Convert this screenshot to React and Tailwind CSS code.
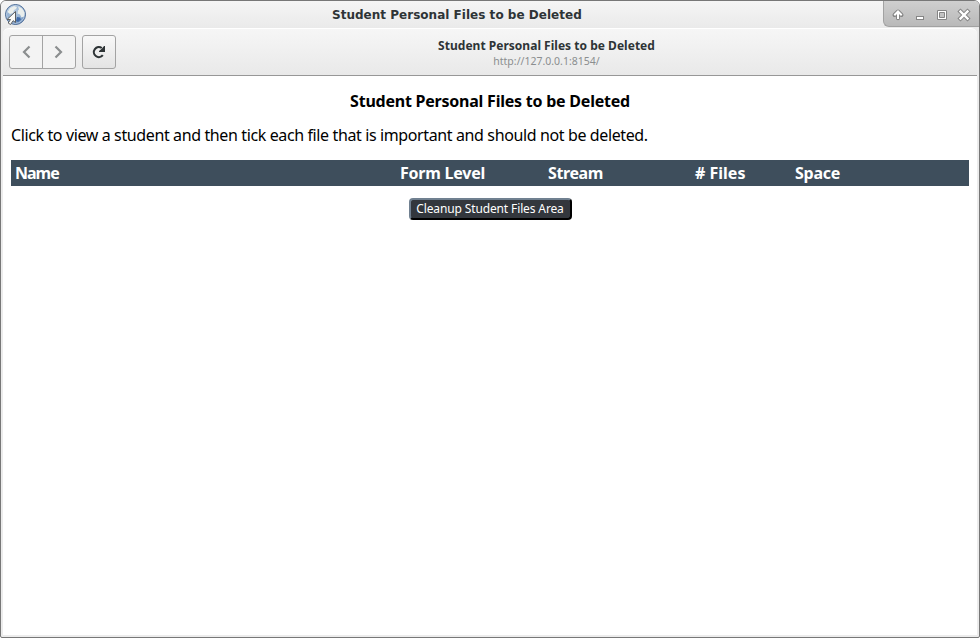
function GlobeIcon() {
  return (
    <svg width="24" height="24" viewBox="0 0 24 24" className="ml-[3px] mt-[2px] shrink-0">
      <defs>
        <radialGradient id="sea" cx="45%" cy="35%" r="75%">
          <stop offset="0" stopColor="#b9cde2" />
          <stop offset="0.6" stopColor="#8eadd0" />
          <stop offset="1" stopColor="#466ea8" />
        </radialGradient>
      </defs>
      <circle cx="11.5" cy="11.5" r="10" fill="url(#sea)" stroke="#4a6a94" />
      <circle cx="11.5" cy="11.5" r="8.9" fill="none" stroke="#c5d6e8" strokeWidth="0.8" />
      <path d="M3.5 9l2.5-4 4-2 3 1-1 2-2 1-1 3-3 1zM14 3.5l4 2 2.5 4-.5 4-2.5 1-1.500-3-2.500-1 .5-3 1-1z" fill="#f1f3ee" opacity=".92" />
      <path d="M13 14l3 .5 1 2-3 2.5-2-1z" fill="#3f6aa8" />
      <path d="M11.5 8.500v11l-2.300-1.800-2.700 3.800-2.300-1.500 2.300-3.500H3z" fill="#fafaf8" stroke="#5b5e60" strokeLinejoin="round" />
    </svg>
  );
}

function WindowControls() {
  return (
    <div className="h-[26px] w-[96px] shrink-0 rounded-bl-[6px] border-b border-l border-[#a2a2a2] bg-gradient-to-b from-[#cfcfcf] to-[#b9b9b9]">
      <svg width="95" height="26" viewBox="884 1 95 26" fill="none">
        <path d="M898 18.2V12.500M894.500 15l3.500-3.500 3.500 3.500" stroke="#858585" strokeWidth="4" strokeLinecap="round" strokeLinejoin="round" />
        <path d="M898 19V12.500M894.300 15.200l3.700-3.700 3.700 3.700" stroke="#fff" strokeWidth="2" />
        <rect x="916.5" y="16.5" width="7" height="3" fill="#fff" stroke="#858585" />
        <path d="M937.5 10.5h9v9h-9zM939.5 12.5v5h5v-5z" fill="#fff" fillRule="evenodd" stroke="#858585" />
        <path d="M960.5 11.5l7 7m0-7l-7 7" stroke="#858585" strokeWidth="4.4" strokeLinecap="square" />
        <path d="M960.5 11.5l7 7m0-7l-7 7" stroke="#fff" strokeWidth="2.4" strokeLinecap="square" />
      </svg>
    </div>
  );
}

function Chevron({ d }) {
  return (
    <svg width="12" height="14" viewBox="0 0 12 14" fill="none" stroke="#8b8e8f" strokeWidth="2.2">
      <path d={d} />
    </svg>
  );
}

export default function App() {
  return (
    <div className="flex h-[638px] w-[980px] flex-col overflow-hidden rounded-t-[6px] rounded-b-[2px] border border-[#777] bg-[#ececec]">
      <header className="flex h-[27px] shrink-0 items-start bg-gradient-to-b from-[#f5f5f5] to-[#eaeaea]">
        <GlobeIcon />
        <h1 className="flex-1 pl-[3px] text-center font-['DejaVu_Sans',sans-serif] text-[12px] font-bold leading-[28px] text-[#2e3436] whitespace-nowrap">
          <span className="inline-block w-[250px] text-left tracking-[0.02px]">Student Personal Files to be Deleted</span>
        </h1>
        <WindowControls />
      </header>

      <div className="mx-[2px] mb-[2px] flex min-h-0 flex-1 flex-col">
        <nav className="flex h-[48px] shrink-0 items-start rounded-t-[6px] border-t border-b border-t-white border-b-[#979797] bg-gradient-to-b from-[#f6f6f6] to-[#e9e9e9] pl-[6px] pt-[6px]">
          <div className="flex h-[34px] w-[67px] rounded-[3px] border border-[#a3a3a3] bg-[#f3f3f3]">
            <button className="flex w-[33px] items-center justify-center border-r border-[#a3a3a3] pl-[2px]">
              <Chevron d="M8.5 1.5L3 7l5.5 5.5" />
            </button>
            <button className="flex flex-1 items-center justify-center pr-[2px]">
              <Chevron d="M3.5 1.5L9 7l-5.5 5.5" />
            </button>
          </div>
          <button className="ml-[6px] flex h-[34px] w-[34px] items-center justify-center rounded-[3px] border border-[#a3a3a3] bg-gradient-to-b from-[#f8f8f8] to-[#e4e4e4]">
            <svg width="16" height="16" viewBox="0 0 16 16">
              <path d="M11.8 11.2A5 5 0 1 1 10.8 4" fill="none" stroke="#2e3436" strokeWidth="2.1" />
              <path d="M14 2v6H8V7l3-2.500L13 2z" fill="#2e3436" />
            </svg>
          </button>
          <div className="flex flex-1 flex-col items-center font-['Noto_Sans',sans-serif] whitespace-nowrap">
            <div className="mt-[2px] text-[12px] font-bold leading-[17px] tracking-[0.02px] text-[#2e3436]">Student Personal Files to be Deleted</div>
            <div className="text-[10.5px] leading-[15px] text-[#8b8e8f]">http://127.0.0.1:8154/</div>
          </div>
        </nav>

        <main className="flex min-h-0 flex-1 flex-col items-center bg-white px-[8px] font-['Noto_Sans',sans-serif] text-base text-black">
          <h2 className="mt-[15px] h-[20px] text-[16px] font-bold leading-[20px] tracking-[-0.23px] whitespace-nowrap">Student Personal Files to be Deleted</h2>
          <p className="mt-[14px] h-[20px] self-stretch text-[16px] leading-[20px] tracking-[-0.38px] whitespace-nowrap">
            Click to view a student and then tick each file that is important and should not be deleted.
          </p>
          <div className="mt-[15px] grid h-[26px] grid-cols-[385px_148px_147px_100px_1fr] items-center self-stretch bg-[#3e4e5c] pl-[4px] text-[16px] font-bold tracking-[-0.4px] text-white">
            <span className="tracking-[-1px]">Name</span>
            <span className="tracking-[-0.22px]">Form Level</span>
            <span>Stream</span>
            <span className="tracking-[0px]"># Files</span>
            <span className="tracking-[-0.25px]">Space</span>
          </div>
          <button className="mt-[12px] h-[22px] w-[163px] rounded-[4px] border-2 border-b-black border-l-[#708090] border-r-black border-t-[#708090] bg-[#33373d] text-[12px] leading-[18px] tracking-[-0.13px] text-white whitespace-nowrap">
            Cleanup Student Files Area
          </button>
        </main>
      </div>
    </div>
  );
}
